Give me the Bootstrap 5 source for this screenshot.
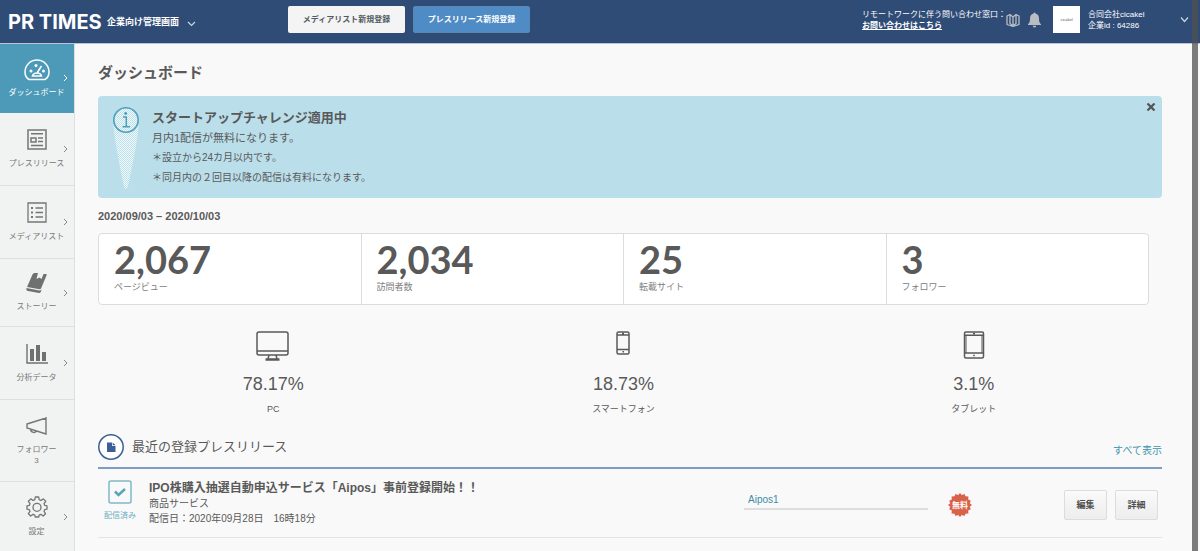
<!DOCTYPE html>
<html lang="ja">
<head>
<meta charset="utf-8">
<meta name="viewport" content="width=device-width, initial-scale=1">
<title>PR TIMES 企業向け管理画面</title>
<link href="https://cdn.jsdelivr.net/npm/bootstrap@5.3.0/dist/css/bootstrap.min.css" rel="stylesheet">
<style>
:root { --navy: #2f4c77; --teal: #4c9ab8; --ink: #595959; }
body { font-family: "Liberation Sans", "Noto Sans CJK JP", sans-serif; font-size: 10px; line-height: 15px; color: var(--ink); background: #f9f9f9; }
svg { display: block; flex: none; }
a { text-decoration: none; }
.topbar { height: 44px; background: var(--navy); border-bottom: 1px solid #b9c3dc; color: #fff; padding: 0 11px 4px 8px; }
.brand-block { width: 280px; }
.logo-text { font: 700 20px/24px Inter, sans-serif; color: #fff; width: 99px; padding-top: 4px; white-space: nowrap; }
.admin-label { font-size: 9px; font-weight: 700; padding-top: 6px; }
.brand-block button { padding-top: 8px; }
.top-btn { width: 117px; height: 27px; padding: 0; font-size: 8px; font-weight: 700; border-radius: 2px; line-height: 12px; }
.top-btn.pale { background: #f4f4f4; color: #505a60; }
.top-btn.blue { background: #4f8bc5; color: #fff; border: 1px solid #5b86b5; }
.top-small { font-size: 8px; line-height: 11px; white-space: nowrap; }
.top-small a { color: #fff; font-weight: 700; text-decoration: underline; }
.contact { width: 144px; }
.company-logo { width: 27px; height: 27px; background: #fff; color: #555; font-size: 4px; line-height: 5px; }
.company { width: 92px; }
.plain-btn { background: none; border: 0; padding: 0; color: inherit; }
.side { width: 75px; background: #f1f3f3; border-right: 1px solid #dcdfdf; }
.side a { display: grid; grid-template-columns: 1fr; align-items: center; color: #777; font-size: 8px; line-height: 11px; border-bottom: 1px solid #dedede; height: 73px; padding-right: 5px; }
.side a.active { background: var(--teal); color: #fff; height: 69px; border-color: var(--teal); }
.side a.short { height: 68px; }
.side a.tall { height: 82px; }
.side a.last { flex: 1 0 68px; border-bottom: 0; }
.side a > * { grid-area: 1 / 1; }
.side a > svg { justify-self: end; }
.side a > span { white-space: nowrap; text-align: center; padding-left: 4px; gap: 8px; }
.side a.active > span { gap: 6px; }
.main-area { padding: 19px 38px 0 23px; min-width: 0; }
.page-title { font-size: 15px; line-height: 20px; font-weight: 700; margin: 0 0 13px; }
.notice { background: #badfeb; border-radius: 4px; padding: 11px 6px 0 14px; height: 102px; }
.notice h2 { font-size: 13px; line-height: 21px; font-weight: 700; margin: 0; }
.notice p { margin: 0; line-height: 20px; }
.notice .first-line { font-size: 11px; }
.notice .plain-btn { margin-top: -4px; }
.period { font-size: 11px; font-weight: 700; margin: 11px 0 9px; }
.inset { margin-right: 13px; }
.stats { background: #fff; border: 1px solid #dcdcdc; border-radius: 4px; }
.stat-cell { padding: 4px 15px 10px; height: 70px; color: #808080; font-size: 9px; line-height: 12px; }
.stat-cell + .stat-cell { border-left: 1px solid #dcdcdc; }
.stat-cell strong { font: 700 38px/43px Lato, sans-serif; color: var(--ink); display: block; }
.devices { margin-top: 24px; font-size: 9px; line-height: 12px; }
.devices svg { height: 34px; }
.devices strong { font-size: 18px; line-height: 22px; font-weight: 400; margin: 10px 0 8px; }
.section-head { margin-top: 19px; padding-bottom: 7px; border-bottom: 2px solid #7d9dc3; }
.section-head h2 { font-size: 13px; line-height: 20px; margin: 0; font-weight: 400; }
.section-head a { color: #4194ad; padding-top: 6px; }
.release { border-bottom: 1px solid #e4e4e4; height: 69px; }
.status-col { width: 44px; font-size: 8px; line-height: 12px; color: #6cb0c2; padding-top: 11px; gap: 6px; }
.release h3 { font-size: 12px; line-height: 16px; margin: 0; font-weight: 700; }
.release-body { padding: 11px 0 0 7px; }
.tag-box { width: 184px; height: 20px; padding: 0 4px; border: 0; border-bottom: 2px solid #dedede; border-radius: 0; background: transparent; font-size: 10px; color: #3b8ca6; margin-top: 21px; }
.free-mark { width: 24px; height: 24px; margin: 24px 92px 0 20px; }
.row-btn { width: 43px; height: 30px; font-size: 9px; line-height: 12px; font-weight: 700; padding: 0; color: #505050; border: 1px solid #dcdcdc; border-radius: 2px; background: linear-gradient(#fafafa, #ededed); }
.row-actions { margin: 21px 4px 0 0; }
.scroll-thumb { top: 0; bottom: 0; right: 2px; width: 6px; background: rgba(80,80,80,.75); }
</style>
</head>
<body class="d-flex flex-column min-vh-100">
<header class="topbar d-flex align-items-center">
  <div class="brand-block d-flex align-items-center">
    <a href="#" class="logo-text">PR TIMES</a>
    <span class="admin-label">企業向け管理画面</span>
    <button class="plain-btn ms-2" aria-label="メニュー"><svg width="9" height="7" fill="none" stroke="#cbd5e5" stroke-width="1.2"><path d="M1 2l3.5 3.5L8 2"/></svg></button>
  </div>
  <button class="btn top-btn pale">メディアリスト新規登録</button>
  <button class="btn top-btn blue ms-2">プレスリリース新規登録</button>
  <div class="ms-auto d-flex align-items-center">
    <div class="top-small contact">リモートワークに伴う問い合わせ窓口：<br><a href="#">お問い合わせはこちら</a></div>
    <svg width="14" height="16" viewBox="0 0 14 16" fill="none" stroke="#b9bdc3" stroke-width="1.3"><path d="M7 5L4 2.500 1 4v8.500L7 14.500l6-2V4l-3-1.500zM7 5v9.500M4 3v8.500l3 2.500 3-2.500V3" stroke-linejoin="round"/></svg>
    <svg class="mx-2" width="13" height="16" viewBox="0 0 13 16" fill="#b9bdc3"><path d="M5.500 1.500a1 1 0 0 1 2 0C10 2 11 4 11 6.500c0 3 .5 4.500 2 5.700V13H0v-.8c1.500-1.200 2-2.700 2-5.700C2 4 3 2 5.500 1.500zM4.700 13.800h3.600a1.800 1.800 0 0 1-3.600 0z"/></svg>
    <div class="company-logo d-flex align-items-center justify-content-center ms-1 me-2">cicakel</div>
    <div class="top-small company">合同会社cicakel<br>企業id : 64286</div>
    <button class="plain-btn" aria-label="アカウント"><svg width="9" height="7" fill="none" stroke="#cbd5e5" stroke-width="1.2"><path d="M1 1.500l3.500 4L8 1.500"/></svg></button>
  </div>
</header>
<div class="d-flex flex-grow-1">
  <nav class="side d-flex flex-column flex-shrink-0">
    <a href="#" class="active"><span class="d-flex flex-column align-items-center">
      <svg width="26" height="22" viewBox="0 0 26 22" fill="none" stroke="#fff" stroke-width="1.500"><path d="M5 20.500C2.500 19 1 16 1 13a12 12 0 0 1 24 0c0 3-1.500 6-4 7.500z"/><path d="M8.500 17c.5-2 2-3 4.500-3s4 1 4.500 3zM13 14l4.500-7" /><g fill="#fff" stroke="none"><circle cx="7" cy="12" r="1.500"/><circle cx="12" cy="6.500" r="1.500"/><circle cx="19.500" cy="12" r="1.500"/></g></svg>ダッシュボード</span>
      <svg width="6" height="8" fill="none" stroke="#fff"><path d="M1 1l3 3-3 3"/></svg></a>
    <a href="#"><span class="d-flex flex-column align-items-center">
      <svg width="20" height="21" viewBox="0 0 20 21" fill="none" stroke="#757575" stroke-width="1.500"><path d="M1 1h18v19H1zM4 4.700h12M4 9h5v4H4zM11 9h5M11 12.500h5M4 16.500h12"/></svg>プレスリリース</span>
      <svg width="6" height="8" fill="none" stroke="#888"><path d="M1 1l3 3-3 3"/></svg></a>
    <a href="#"><span class="d-flex flex-column align-items-center">
      <svg width="20" height="21" viewBox="0 0 20 21" fill="none" stroke="#757575" stroke-width="1.300"><path d="M1 1h18v19H1zM8.500 6H16M8.500 10.500H16M8.500 15H16"/><path stroke-width="2" d="M4 6h2M4 10.500h2M4 15h2"/></svg>メディアリスト</span>
      <svg width="6" height="8" fill="none" stroke="#888"><path d="M1 1l3 3-3 3"/></svg></a>
    <a href="#" class="short"><span class="d-flex flex-column align-items-center">
      <svg width="23" height="20" viewBox="0 0 23 20"><path fill="#707070" d="M7.500 1.500Q8 0 9.500 0H13l-1.500 6 3-1.500L16.500 6 18.500 1H21q1 0 .7 1L16 15.500q-.5 1-1.500.8L2 14zM1.500 15l13 2.500q1.500 0 2.200-1.200l-.7 2.200Q15.500 20 14 20L3 18Q.8 17.500 1.500 15z"/></svg>ストーリー</span>
      <svg width="6" height="8" fill="none" stroke="#888"><path d="M1 1l3 3-3 3"/></svg></a>
    <a href="#"><span class="d-flex flex-column align-items-center">
      <svg width="22" height="20" viewBox="0 0 22 20"><path fill="none" stroke="#707070" stroke-width="1.400" d="M1 0v19h21"/><path fill="#707070" d="M4 5h4v12H4zM10 1h4v16h-4zM16 8h4v9h-4z"/></svg>分析データ</span>
      <svg width="6" height="8" fill="none" stroke="#888"><path d="M1 1l3 3-3 3"/></svg></a>
    <a href="#" class="tall"><span class="d-flex flex-column align-items-center">
      <svg width="22" height="20" viewBox="0 0 22 20" fill="none" stroke="#757575" stroke-width="1.400"><path d="M1 8l19-6v16L1 12zM20 1v18M4.500 13c0 4 5.500 4.500 6 1.500"/></svg><span>フォロワー<br>3</span></span></a>
    <a href="#" class="last"><span class="d-flex flex-column align-items-center">
      <svg width="22" height="22" viewBox="0 0 22 22" fill="none" stroke="#757575" stroke-width="1.300" stroke-linejoin="round"><path d="M9.300 1h3.400l.5 2.700 1.800.8 2.300-1.600 2.400 2.400L18 7.600l.8 1.800 2.200.4v3.400l-2.300.4-.7 1.800 1.500 2.300-2.300 2.300-2.300-1.600-1.800.8-.4 1.800H9.300l-.5-1.900-1.800-.7-2.300 1.600-2.300-2.300 1.600-2.300-.8-1.800-2.200-.4V9.800l2.300-.4.7-1.800-1.600-2.300 2.400-2.400 2.300 1.600 1.700-.8z"/><circle cx="11" cy="11.300" r="4"/></svg>設定</span>
      <svg width="6" height="8" fill="none" stroke="#888"><path d="M1 1l3 3-3 3"/></svg></a>
  </nav>
  <main class="main-area flex-grow-1">
    <h1 class="page-title">ダッシュボード</h1>
    <section class="notice d-flex">
      <svg width="28" height="84" viewBox="0 0 28 84"><defs><pattern id="dots" width="2" height="2" patternUnits="userSpaceOnUse"><path fill="#f2fafc" d="M0 0h1v1H0zM1 1h1v1H1z"/></pattern></defs><path fill="url(#dots)" d="M1 13a13 13 0 0 1 26 0C26 34 20 58 16 80q-2 4-4 0C8 58 2 34 1 13z"/><circle cx="14" cy="13" r="12.200" fill="none" stroke="#4b9fbf" stroke-width="1.600"/><path fill="none" stroke="#4b9fbf" stroke-width="1.500" d="M11 10h3.300v9.500M10.500 19.700h7.500"/><circle cx="13.700" cy="6.500" r="1.400" fill="#4b9fbf"/></svg>
      <div class="ps-2 ms-1 flex-grow-1">
        <h2>スタートアップチャレンジ適用中</h2>
        <p class="first-line">月内1配信が無料になります。</p>
        <p>＊設立から24カ月以内です。</p>
        <p>＊同月内の２回目以降の配信は有料になります。</p>
      </div>
      <button class="plain-btn align-self-start" aria-label="閉じる"><svg width="10" height="8" viewBox="0 0 10 8" fill="none" stroke="#555" stroke-width="2.200"><path d="M1.500.5l7 7M8.500.5l-7 7"/></svg></button>
    </section>
    <p class="period">2020/09/03 – 2020/10/03</p>
    <section class="inset stats row g-0">
      <div class="col stat-cell"><strong>2,067</strong>ページビュー</div>
      <div class="col stat-cell"><strong>2,034</strong>訪問者数</div>
      <div class="col stat-cell"><strong>25</strong>転載サイト</div>
      <div class="col stat-cell"><strong>3</strong>フォロワー</div>
    </section>
    <section class="inset devices row g-0">
      <div class="col d-flex flex-column align-items-center">
        <svg width="34" height="34" fill="none" stroke="#595959" stroke-width="1.500"><rect x="1" y="3" width="31" height="23" rx="2"/><path d="M1 22h31M13 26l-1 4M20 26l1 4"/><path stroke-width="2.500" d="M9.500 30.500h14"/></svg>
        <strong>78.17%</strong>PC</div>
      <div class="col d-flex flex-column align-items-center">
        <svg width="16" height="34" fill="none" stroke="#595959" stroke-width="1.500"><rect x="2" y="3" width="12" height="22" rx="1.500"/><path d="M2 6h12M2 20.500h12M7 4.500h2M7.500 22.700h1.500"/></svg>
        <strong>18.73%</strong>スマートフォン</div>
      <div class="col d-flex flex-column align-items-center">
        <svg width="22" height="34" fill="none" stroke="#595959" stroke-width="1.500"><rect x="1.500" y="3" width="19" height="26" rx="1.500"/><path d="M2 6.300h18M2 24h18M10 4.600h2M10.200 26.600h1.600"/><path stroke-width="1" d="M3 6v18M19 6v18"/></svg>
        <strong>3.1%</strong>タブレット</div>
    </section>
    <section>
      <div class="section-head d-flex align-items-center">
        <svg class="me-2" width="26" height="26" viewBox="0 0 26 26"><circle cx="13" cy="13" r="12.200" fill="#fff" stroke="#3d5f95" stroke-width="1.500"/><path fill="#3d5f95" d="M9 8.500h5v3.500h3.500v6H9zM14.700 8.500l2.800 2.800h-2.800z"/></svg>
        <h2>最近の登録プレスリリース</h2>
        <a href="#" class="ms-auto">すべて表示</a>
      </div>
      <article class="release d-flex">
        <div class="status-col d-flex flex-column align-items-center">
          <svg width="24" height="24" fill="none" stroke="#7db9c8" stroke-width="1.500"><rect x="1" y="1" width="22" height="22" rx="2"/><path stroke="#58a5ba" stroke-width="2.500" d="M7 11.500l3.500 3.500 6.500-6"/></svg>配信済み
        </div>
        <div class="release-body flex-grow-1">
          <h3>IPO株購入抽選自動申込サービス「Aipos」事前登録開始！！</h3>
          <div>商品サービス</div>
          <div>配信日：2020年09月28日　16時18分</div>
        </div>
        <input class="tag-box" type="text" value="Aipos1" aria-label="タグ">
        <div class="free-mark"><svg width="24" height="24" viewBox="0 0 24 24"><path fill="#d9624a" d="M12 0l1.800 2L16.500.9l1 2.400 2.900.3-.2 2.900 2.600 1.300-1 2.400L24 12l-2.200 1.800 1 2.400-2.600 1.300.2 2.900-2.900.3-1 2.400-2.700-1.100L12 24l-1.800-2-2.700 1.100-1-2.400-2.900-.3.2-2.900-2.600-1.300 1-2.400L0 12l2.200-1.800-1-2.400 2.600-1.300-.2-2.900 2.900-.3 1-2.400 2.700 1.100z"/><text x="12" y="15" text-anchor="middle" font-size="8" font-weight="700" fill="#fff">無料</text></svg></div>
        <div class="row-actions d-flex gap-2">
          <button class="btn row-btn">編集</button>
          <button class="btn row-btn">詳細</button>
        </div>
      </article>
    </section>
  </main>
</div>
<div class="scroll-thumb position-fixed"></div>
<script src="https://cdn.jsdelivr.net/npm/bootstrap@5.3.0/dist/js/bootstrap.bundle.min.js"></script>
</body>
</html>
